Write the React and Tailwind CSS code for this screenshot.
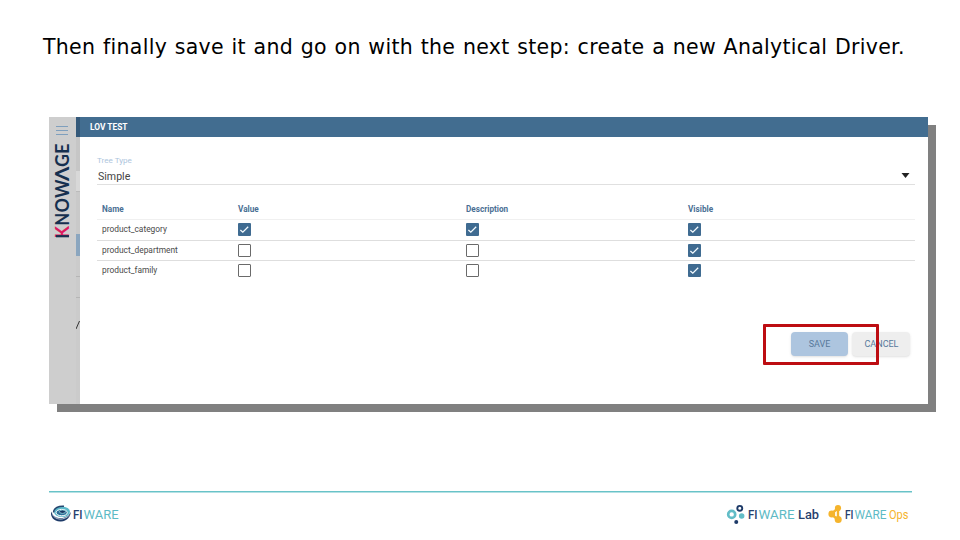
import React from "react";

function Box({ on }) {
  return on ? (
    <span className="flex h-[13px] w-[13px] items-center justify-center rounded-[1px] bg-[#3f6b91]">
      <svg width="13" height="13" viewBox="0 0 13 13" fill="none" stroke="#f4fbff" strokeWidth="1.3">
        <path d="M2.4 7 L4.8 9.2 L10.2 3.8" />
      </svg>
    </span>
  ) : (
    <span className="block h-[13px] w-[13px] rounded-[1px] border border-[#6a6a6a] bg-white" />
  );
}

const rows = [
  ["product_category", true, true, true],
  ["product_department", false, false, true],
  ["product_family", false, false, true],
];

const cols = "grid grid-cols-[136px_228px_222px_1fr] items-center pl-[5px]";

// Each letter of the vertical wordmark: character, offset along the reading axis, width.
const wordmark = [
  ["N", -108.5, 12.5],
  ["O", -95.5, 14.5],
  ["W", -81, 18.5],
  ["Λ", -64, 14.5],
  ["G", -50, 13],
  ["E", -37, 10.5],
];

function Sidebar() {
  return (
    <div className="flex w-[31px] shrink-0 bg-[#cecece]">
      <div className="w-[27px] shrink-0">
        <svg width="27" height="130" viewBox="0 0 27 130" fill="none">
          <path d="M7 9.5H19M7 13.5H19M7 17.5H19" stroke="#7f9fbd" />
          <g transform="rotate(-90)" className="font-['Lato',sans-serif] text-[18px] font-bold" fill="#16304f">
            <text x="-121.5" y="20" textLength="12.5" lengthAdjust="spacingAndGlyphs" fill="#dd1a5e">K</text>
            {wordmark.map(([c, x, w]) => (
              <text key={c} x={x} y="20" textLength={w} lengthAdjust="spacingAndGlyphs">{c}</text>
            ))}
          </g>
          <path d="M7 119.2H20" stroke="#16304f" strokeWidth="2.2" />
        </svg>
      </div>
      <div className="flex w-[4px] flex-col bg-[#cbcbcb]">
        <div className="h-5 bg-[#34597a]" />
        <div className="h-[34px] bg-[#c6c6c6]" />
        <div className="h-5 bg-[#d8d8d8]" />
        <div className="h-[43px] border-t border-[#bbb] bg-[#c9c9c9]" />
        <div className="h-[22px] bg-[#8ba6bf]" />
        <div className="h-[21px] border-b border-[#b5b5b5]" />
        <div className="h-[21px] border-b border-[#b5b5b5]" />
        <svg className="mt-[22px]" width="4" height="10" fill="none" stroke="#333">
          <path d="M0 9L3.5 1" />
        </svg>
      </div>
    </div>
  );
}

function Dialog() {
  return (
    <div className="flex grow flex-col bg-white">
      <div className="flex h-5 items-center bg-[#426d90] pl-[10px] text-[8.4px] font-bold text-white">
        <span>LOV TEST</span>
      </div>
      <div className="flex grow flex-col pr-[13px] pl-[17px]">
        <div className="mt-[17px] h-3 text-[8.1px] leading-3 text-[#adc5dd]">Tree Type</div>
        <div className="flex h-[19px] items-center justify-between border-b border-[#e0e0e0] pr-[5px] pl-px text-[10.6px] text-[#444]">
          <span className="pt-[3px]">Simple</span>
          <svg width="9" height="5"><path d="M0.5 0H8.5L4.5 5Z" fill="#222" /></svg>
        </div>
        <div className={`${cols} mt-[14px] h-[21px] border-b border-[#f0f0f0] text-[8.2px] font-bold text-[#4a6f94]`}>
          <span>Name</span><span>Value</span><span>Description</span><span>Visible</span>
        </div>
        {rows.map(([name, a, b, c]) => (
          <div key={name} className={`${cols} h-[20.5px] border-b border-[#dedede] text-[8.4px] text-[#4a4a4a] last:border-transparent`}>
            <span>{name}</span><Box on={a} /><Box on={b} /><Box on={c} />
          </div>
        ))}
      </div>
      <div className="mr-[18px] mb-[48px] flex justify-end gap-1 text-[9px] text-[#57799b]">
        <button className="h-6 w-[57px] rounded-sm bg-[#adc5df] pt-px shadow">SAVE</button>
        <button className="h-6 w-[58px] rounded-sm bg-[#eeeeee] pt-px pl-px shadow">CANCEL</button>
      </div>
    </div>
  );
}

function Brand({ width, fi, ware, suffix, suffixX, suffixWidth, suffixColor, size }) {
  return (
    <svg width={width} height="22" viewBox={`0 0 ${width} 22`} fontSize={size} className="overflow-visible font-['Roboto',sans-serif]">
      <text x="0" y="15.5" fill="#26406e" fontWeight="500" textLength={fi} lengthAdjust="spacingAndGlyphs">FI</text>
      <text x={fi + 1} y="15.5" fill="#5dbac5" textLength={ware} lengthAdjust="spacingAndGlyphs">WARE</text>
      {suffix && (
        <text x={suffixX} y="15.5" fill={suffixColor} fontWeight={suffix === "Lab" ? 500 : 400} textLength={suffixWidth} lengthAdjust="spacingAndGlyphs">
          {suffix}
        </text>
      )}
    </svg>
  );
}

function Footer() {
  return (
    <footer className="mt-[87px] ml-[49px] w-[863px]">
      <div className="h-[2px] border-b border-[#b5e1e4] bg-[#68c3c8]" />
      <div className="flex h-[42px] items-center justify-between">
        <div className="flex items-center">
          <svg width="24" height="22" viewBox="0 0 24 22" fill="none">
            <path d="M2.5 8.5C0.5 13 5 19 12 18.5C18 18 22 13.5 21.5 9C19.5 13.5 15 15.6 10 15C5.5 14.4 3 11.5 2.5 8.5Z" fill="#1d3a68" />
            <ellipse cx="13" cy="8.7" rx="8" ry="5.3" fill="#5bb8c9" />
            <path d="M4.5 9.5C4.5 5 10 2.8 15 3.3" stroke="#24466f" strokeWidth="1.5" />
            <ellipse cx="12.7" cy="9.6" rx="5.6" ry="3.2" stroke="#fff" strokeWidth="1" fill="#2f6f98" />
            <ellipse cx="13.5" cy="8.7" rx="3" ry="1.7" fill="#173561" stroke="#9bdbe2" strokeWidth=".8" />
            <path d="M3.5 11.5C6 17 15 18 20.5 12" stroke="#fff" strokeWidth=".7" />
          </svg>
          <Brand width={46} size={13} fi={9.5} ware={35} />
        </div>
        <div className="flex items-center pr-[3px]">
          <svg className="mr-[3px] overflow-visible" width="19" height="22" viewBox="0 0 20 22" fill="none">
            <circle cx="6" cy="11.4" r="3.7" stroke="#62bdc7" strokeWidth="2.8" />
            <circle cx="14.5" cy="5" r="2.6" stroke="#1d3a68" strokeWidth="2" />
            <circle cx="16.5" cy="13.2" r="2.9" fill="#62bdc7" />
            <circle cx="10.8" cy="19.3" r="2.1" fill="#1d3a68" />
          </svg>
          <Brand width={72} size={13} fi={9.5} ware={36} suffix="Lab" suffixX={50} suffixWidth={21} suffixColor="#26406e" />
          <svg className="mr-px ml-[8px]" width="16" height="22" viewBox="0 0 16 22">
            <path d="M3.5 11L10 5M3.5 11L10 17M10 5V17" stroke="#f5b42c" strokeWidth="2.4" />
            <circle cx="3.8" cy="11" r="3.4" fill="#f5b42c" />
            <circle cx="10" cy="5" r="3.1" fill="#f5b42c" />
            <circle cx="10.2" cy="16.5" r="3.5" fill="#f5b42c" />
          </svg>
          <Brand width={64} size={12.5} fi={8.5} ware={32} suffix="Ops" suffixX={44} suffixWidth={19.5} suffixColor="#f5b42c" />
        </div>
      </div>
    </footer>
  );
}

export default function App() {
  return (
    <div className="relative h-[540px] w-[960px] overflow-hidden bg-white font-['Roboto',sans-serif]">
      <h1 className="h-[117px] pt-[33px] pl-[43px] font-['DejaVu_Sans',sans-serif] text-[20.5px] leading-7 tracking-[0.3px] [word-spacing:0.85px] whitespace-nowrap text-black">
        Then finally save it and go on with the next step: create a new Analytical Driver.
      </h1>
      <div className="ml-[49px] flex h-[287px] w-[879px] shadow-[8px_8px_0_#808080]">
        <Sidebar />
        <Dialog />
      </div>
      <div className="absolute top-[324px] left-[763px] h-[41px] w-[116px] rounded-[1px] border-[3px] border-[#bd0d12]" />
      <Footer />
    </div>
  );
}
